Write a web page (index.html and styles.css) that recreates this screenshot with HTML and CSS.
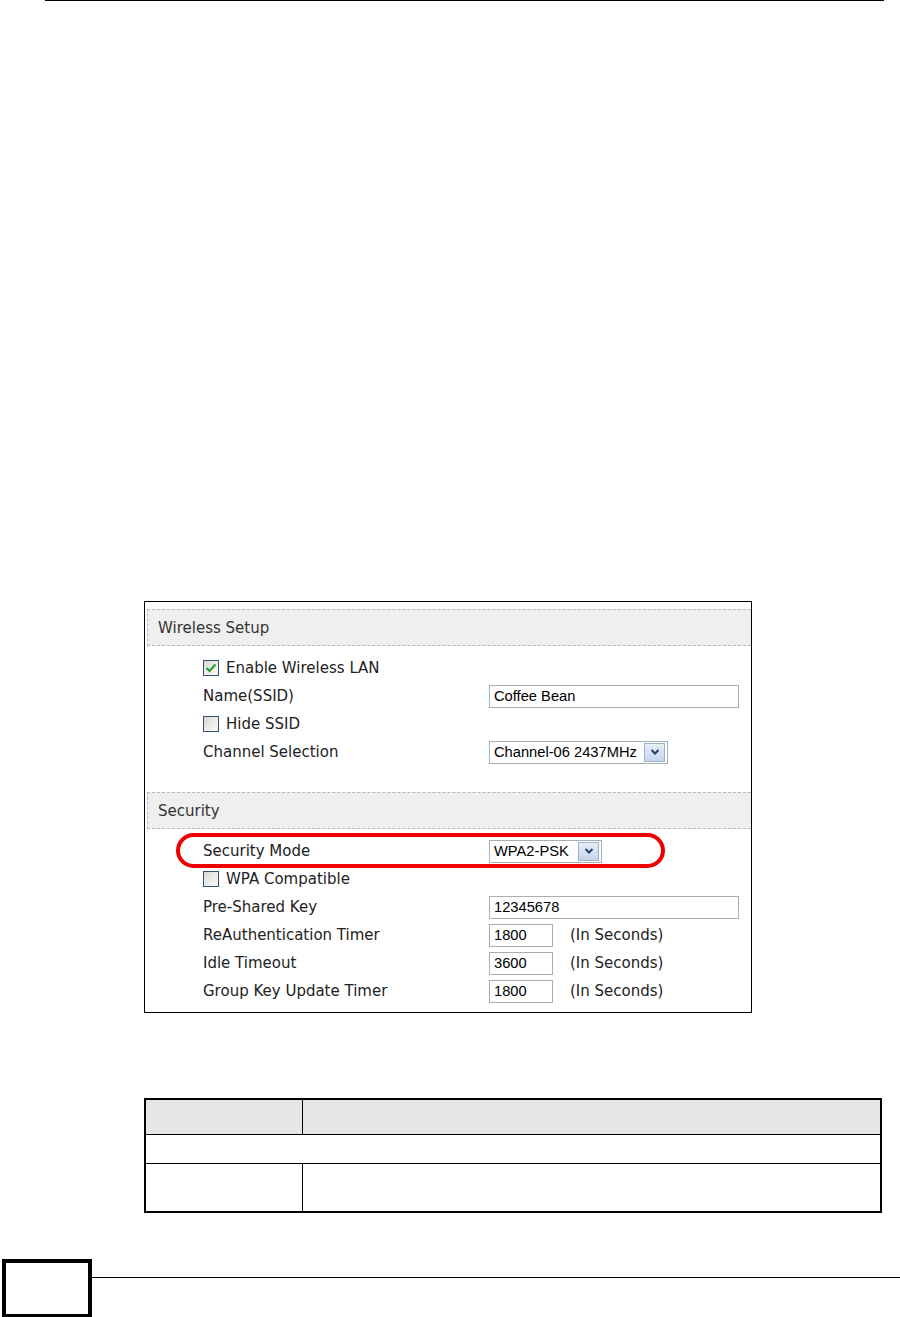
FILE: index.html
```html
<!DOCTYPE html>
<html lang="en">
<head>
  <meta charset="UTF-8">
  <title>Wireless Setup</title>
  <link rel="stylesheet" href="styles.css">
</head>
<body>

<div class="top-rule"></div>

<div class="shot">
  <div class="band">Wireless Setup</div>
  <div class="form">
    <div class="row">
      <span class="check"><span class="box"><svg width="14" height="14" viewBox="0 0 14 14"><path d="M2.5 7 L5.5 10 L11.5 3.5" fill="none" stroke="#1fa52a" stroke-width="2.2"/></svg></span>Enable Wireless LAN</span>
    </div>
    <div class="row"><span>Name(SSID)</span><span class="field wide">Coffee Bean</span></div>
    <div class="row"><span class="check"><span class="box"></span>Hide SSID</span></div>
    <div class="row">
      <span>Channel Selection</span>
      <span class="field select channel">Channel-06 2437MHz<span class="drop"><svg width="12" height="10" viewBox="0 0 12 10"><path d="M2.5 3 L6 6.5 L9.5 3" fill="none" stroke="#24406c" stroke-width="2"/></svg></span></span>
    </div>
  </div>

  <div class="band second">Security</div>
  <div class="form">
    <div class="row">
      <span>Security Mode</span>
      <span class="field select mode">WPA2-PSK<span class="drop"><svg width="12" height="10" viewBox="0 0 12 10"><path d="M2.5 3 L6 6.5 L9.5 3" fill="none" stroke="#24406c" stroke-width="2"/></svg></span></span>
      <div class="mark"></div>
    </div>
    <div class="row"><span class="check"><span class="box"></span>WPA Compatible</span></div>
    <div class="row"><span>Pre-Shared Key</span><span class="field wide">12345678</span></div>
    <div class="row"><span>ReAuthentication Timer</span><span class="pair"><span class="field short">1800</span><span class="unit">(In Seconds)</span></span></div>
    <div class="row"><span>Idle Timeout</span><span class="pair"><span class="field short">3600</span><span class="unit">(In Seconds)</span></span></div>
    <div class="row"><span>Group Key Update Timer</span><span class="pair"><span class="field short">1800</span><span class="unit">(In Seconds)</span></span></div>
  </div>
</div>

<table class="desc">
  <tr class="head"><th class="first"></th><th></th></tr>
  <tr class="sub"><td colspan="2"></td></tr>
  <tr class="item"><td></td><td></td></tr>
</table>

<div class="foot">
  <div class="page-box"></div>
  <div class="foot-rule"></div>
</div>

</body>
</html>
```

FILE: styles.css
```css
body { margin: 0; background: #fff; font-family: "DejaVu Sans", Verdana, sans-serif; }
.top-rule { height: 1px; background: #000; margin: 0 16px 0 45px; }

.shot { margin: 600px 0 0 144px; width: 608px; box-sizing: border-box; border: 1px solid #000; padding: 7px 0 7px 2px; }
.band { height: 37px; box-sizing: border-box; background: #efefef; border: 1px dashed #b8b8b8; border-right: none; display: flex; align-items: center; padding-left: 10px; font-size: 15px; color: #333; }
.band.second { margin-top: 26px; }
.form { margin-top: 8px; padding-left: 56px; }
.row { position: relative; display: grid; grid-template-columns: 286px auto; align-items: center; height: 28px; font-size: 15px; color: #222; }
.check { display: flex; align-items: center; white-space: nowrap; }
.box { width: 14px; height: 14px; border: 1px solid #2f5278; background: linear-gradient(135deg, #d9d9d4, #fbfbf9); margin-right: 7px; display: flex; }

.field { height: 23px; box-sizing: border-box; border: 1px solid #a9aeb3; display: flex; align-items: center; padding-left: 4px; font-family: "Liberation Sans", Arial, sans-serif; font-size: 14.7px; color: #000; background: #fff; }
.field.wide { width: 250px; }
.field.short { width: 64px; }
.select { justify-content: space-between; padding-right: 2px; white-space: nowrap; }
.select.channel { width: 179px; }
.select.mode { width: 113px; }
.drop { width: 21px; height: 19px; box-sizing: border-box; border: 1px solid #98b2d0; background: linear-gradient(#e6eef8, #c5d5ea); display: flex; align-items: center; justify-content: center; }
.pair { display: flex; align-items: center; }
.unit { margin-left: 17px; }
.mark { position: absolute; left: -27px; top: -4px; width: 489px; height: 35px; box-sizing: border-box; border: 4px solid #ee0000; border-radius: 18px; }

.desc { margin: 85px 0 0 144px; width: 738px; border-collapse: collapse; border: 2px solid #000; }
.desc th, .desc td { border: 1px solid #000; padding: 0; }
.desc .head th { height: 34px; background: #e6e6e6; }
.desc .head .first { width: 156px; }
.desc .sub td { height: 28px; }
.desc .item td { height: 47px; }

.foot { display: flex; margin-top: 46px; }
.page-box { width: 90px; height: 59px; box-sizing: border-box; border: 4px solid #000; margin-left: 2px; }
.foot-rule { flex: 1; height: 1px; background: #000; margin-top: 18px; }
```
